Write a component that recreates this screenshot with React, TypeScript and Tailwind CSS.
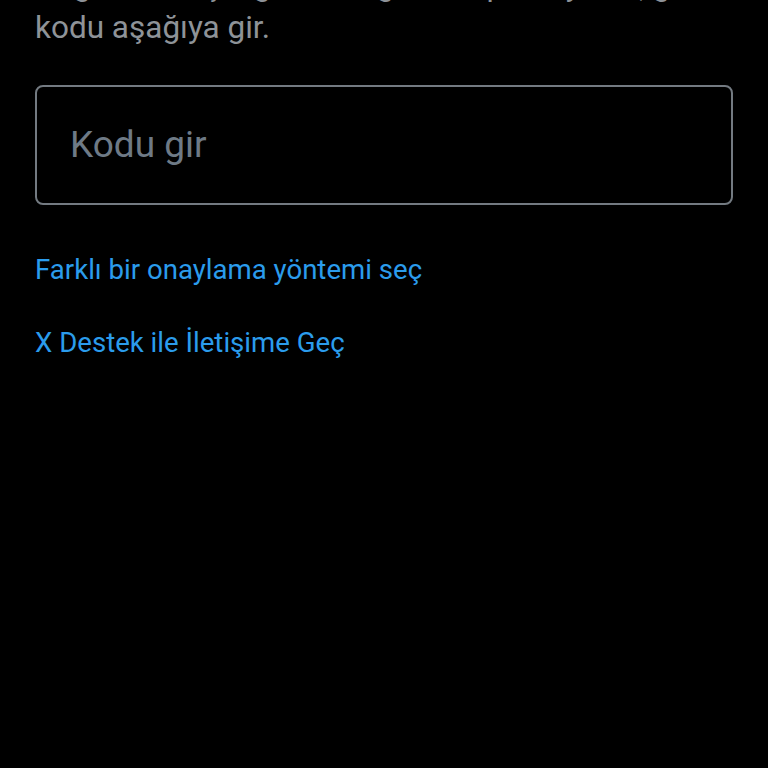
export default function App() {
  return (
    <div
      className="min-h-[768px] w-full overflow-hidden bg-black px-[35px]"
      style={{ fontFamily: "Roboto, 'Noto Sans', sans-serif" }}
    >
      {/* the prompt text is scrolled partly out of view */}
      <p className="-mt-[35px] whitespace-nowrap text-[31.5px] leading-[42px] text-[#8e9398]">
        Doğrulama için gönderdiğimiz e-postayı bul, gelen kutuna bak ve
        <br />
        kodu aşağıya gir.
      </p>

      <div className="mt-[36px] flex h-[120px] items-center rounded-[8px] border-2 border-[#737a81] px-[33px]">
        <input
          className="w-full bg-transparent text-[37px] text-[#e7e9ea] outline-none placeholder:text-[#6e7a86]"
          placeholder="Kodu gir"
        />
      </div>

      <div className="mt-[47px] flex flex-col items-start gap-[38px] text-[27.6px] leading-[35px] text-[#2b9cec]">
        <a href="#">Farklı bir onaylama yöntemi seç</a>
        <a href="#">X Destek ile İletişime Geç</a>
      </div>
    </div>
  );
}
